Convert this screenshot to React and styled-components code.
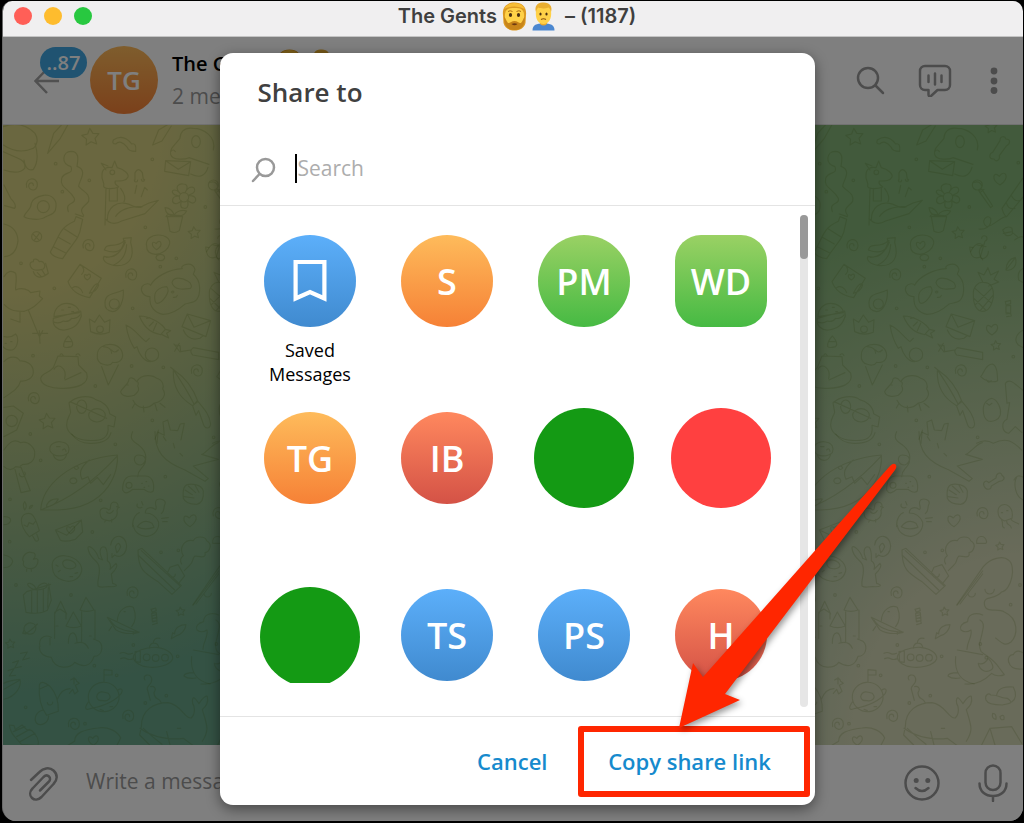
import { useState } from 'react';
import styled, { createGlobalStyle } from 'styled-components';

const GlobalStyle = createGlobalStyle`
  * {
    box-sizing: border-box;
  }

  body {
    margin: 0;
    background: #000;
    font-family: 'Open Sans', 'Noto Sans', sans-serif;
  }

  button,
  input {
    font-family: inherit;
  }

  button {
    padding: 0;
    border: 0;
    background: none;
    cursor: pointer;
  }

  svg {
    display: block;
  }
`;

const gradients = {
  blue: 'linear-gradient(#5caffa, #408acf)',
  orange: 'linear-gradient(#febb5b, #f68136)',
  green: 'linear-gradient(#9ad164, #46ba43)',
  red: 'linear-gradient(#ff885e, #d45246)',
};

const Window = styled.div`
  display: flex;
  flex-direction: column;
  height: calc(100vh - 3px);
  min-height: 560px;
  margin: 1px 1px 2px 2px;
  border-left: 1px solid #6b6b6b;
  border-radius: 10px 10px 14px 14px;
  overflow: hidden;
`;

const TitleBar = styled.div`
  display: grid;
  grid-template-columns: 1fr auto 1fr;
  align-items: center;
  flex: none;
  height: 36px;
  padding: 0 3px 5px 11px;
  background: #f0eff0;
  border-bottom: 1px solid #c4c4c4;
`;

const Lights = styled.div`
  display: flex;
  gap: 12px;
`;

const Light = styled.button`
  width: 18px;
  height: 18px;
  border-radius: 50%;
  background: ${(props) => props.$color};
`;

const WindowTitle = styled.h1`
  display: flex;
  align-items: center;
  gap: 5px;
  margin: 0;
  font-family: Inter, sans-serif;
  font-size: 20px;
  font-weight: 600;
  line-height: 28px;
  color: #3f3f3f;
`;

const Chat = styled.main`
  position: relative;
  display: flex;
  flex-direction: column;
  flex: 1;
  min-height: 0;
`;

const ChatHeader = styled.header`
  display: flex;
  align-items: center;
  flex: none;
  height: 88px;
  padding: 0 19px 2px 30px;
  background: #fff;
  border-bottom: 1px solid #e2e2e2;
`;

const BackButton = styled.button`
  position: relative;
  width: 57px;
  height: 68px;
  color: #a0a0a0;
`;

const Badge = styled.span`
  position: absolute;
  top: 1px;
  left: 7px;
  width: 47px;
  border-radius: 16px;
  background: #40a7e3;
  color: #fff;
  font-size: 20px;
  font-weight: 600;
  line-height: 31px;
`;

const ChatAvatar = styled.div`
  width: 68px;
  height: 68px;
  border-radius: 50%;
  background: ${gradients.orange};
  color: #fff;
  font-size: 26px;
  font-weight: 600;
  line-height: 68px;
  text-align: center;
`;

const ChatInfo = styled.div`
  flex: 1;
  padding-left: 14px;
`;

const ChatName = styled.div`
  display: flex;
  align-items: center;
  gap: 8px;
  font-size: 20px;
  font-weight: 600;
  line-height: 32px;
`;

const ChatMembers = styled.div`
  color: #999;
  font-size: 21px;
  line-height: 32px;
`;

const HeaderActions = styled.div`
  display: flex;
  align-items: center;
  gap: 32px;
`;

const IconButton = styled.button`
  color: #999;
`;

const Wallpaper = styled.div`
  flex: 1;
  min-height: 0;
  background:
    radial-gradient(ellipse 52% 92% at 0 0, #d4ce80 30%, rgba(212, 206, 128, 0) 100%),
    radial-gradient(ellipse 48% 88% at 100% 100%, #d2d6b4 35%, rgba(210, 214, 180, 0) 100%),
    radial-gradient(ellipse 60% 100% at 100% 0, #84b478 50%, rgba(132, 180, 120, 0) 100%),
    #68a488;

  svg {
    width: 100%;
    height: 100%;
  }
`;

const Compose = styled.footer`
  display: flex;
  align-items: center;
  flex: none;
  height: 76px;
  padding: 0 14px 0 22px;
  background: #fff;
`;

const MessageInput = styled.input`
  flex: 1;
  min-width: 0;
  margin: 0 20px 4px 25px;
  padding: 0;
  border: 0;
  outline: 0;
  font-size: 21px;

  &::placeholder {
    color: #999;
    opacity: 1;
  }
`;

const ComposeActions = styled.div`
  display: flex;
  align-items: center;
  gap: 36px;
`;

const Scrim = styled.div`
  position: absolute;
  inset: 0;
  display: flex;
  align-items: center;
  justify-content: center;
  padding: 16px 16px 16px 24px;
  background: rgba(0, 0, 0, 0.5);
`;

const Dialog = styled.section`
  display: flex;
  flex-direction: column;
  width: 100%;
  max-width: 595px;
  height: 100%;
  border-radius: 13px;
  background: #fff;
  box-shadow: 0 4px 14px rgba(0, 0, 0, 0.45);
`;

const DialogTitle = styled.h2`
  margin: 0;
  padding: 21px 38px 22px;
  color: #404040;
  font-size: 26px;
  font-weight: 600;
  line-height: 36px;
`;

const SearchRow = styled.label`
  display: flex;
  align-items: center;
  flex: none;
  height: 74px;
  padding: 0 31px;
  border-bottom: 1px solid #e4e4e4;
  color: #999;
`;

const Caret = styled.span`
  width: 2px;
  height: 29px;
  margin-left: 19px;
  background: #000;
`;

const SearchInput = styled.input`
  flex: 1;
  min-width: 0;
  height: 32px;
  padding: 0 0 2px 1px;
  border: 0;
  outline: 0;
  background: none;
  caret-color: transparent;
  font-size: 21px;

  &::placeholder {
    color: #adadad;
    opacity: 1;
  }
`;

const ListArea = styled.div`
  display: flex;
  flex: 1;
  min-height: 0;
`;

const ContactGrid = styled.div`
  display: grid;
  flex: 1;
  grid-template-columns: repeat(4, 1fr);
  grid-auto-rows: 177px;
  padding: 29px 3px 0 22px;
  overflow: hidden;
`;

const Contact = styled.button`
  display: flex;
  flex-direction: column;
  align-items: center;
`;

const AvatarSlot = styled.span`
  display: flex;
  align-items: center;
  justify-content: center;
  height: 92px;
`;

const Avatar = styled.span`
  display: flex;
  align-items: center;
  justify-content: center;
  width: 92px;
  height: 92px;
  border-radius: ${(props) => (props.$square ? '26px' : '50%')};
  background: ${(props) => gradients[props.$color]};
  color: #fff;
  font-size: 36px;
  font-weight: 600;
`;

const Disc = styled.span`
  width: 100px;
  height: ${(props) => props.$height}px;
  clip-path: circle(50px at 50% 50px);
  background: ${(props) => props.$color};
`;

const ContactName = styled.span`
  width: 100px;
  margin-top: 11px;
  color: #000;
  font-size: 18px;
  font-weight: 500;
  line-height: 24px;
`;

const ScrollTrack = styled.div`
  width: 8px;
  margin: 9px 7px;
  border-radius: 4px;
  background: #e6e6e6;
`;

const ScrollThumb = styled.div`
  height: 44px;
  border-radius: 4px;
  background: #999;
`;

const DialogFooter = styled.div`
  display: flex;
  align-items: center;
  justify-content: flex-end;
  flex: none;
  gap: 30px;
  height: 89px;
  padding: 0 5px;
  border-top: 1px solid #e4e4e4;
`;

const TextButton = styled.button`
  color: #168acd;
  font-size: 22px;
  font-weight: 600;
  line-height: 32px;
`;

const Callout = styled.div`
  position: relative;
  display: flex;
  align-items: center;
  justify-content: center;
  width: 232px;
  height: 71px;
  padding-right: 8px;
  border: 6px solid #ff2600;
  border-radius: 3px;
`;

const Arrow = styled.svg`
  position: absolute;
  right: -94px;
  bottom: 62px;
  overflow: visible;
  filter: drop-shadow(2px 3px 3px rgba(0, 0, 0, 0.4));
  pointer-events: none;
`;

// emoji with a beard, used in both titles
const BeardEmoji = () => (
  <svg width="25" height="29" viewBox="0 0 25 29" aria-hidden="true">
    <path d="M1 13C0 5 5 .5 12.500 .5S25 5 24 13l-.5 8c-1 5-6 7.500-11 7.500S2.500 26 1.500 21z" fill="#dc9a22" />
    <path d="M3 12c1-5 3-6 9.500-6S21 7 22 12c.5 9-2 15-9.500 15S2.500 21 3 12z" fill="#ffd148" />
    <path d="M2 7Q5 1 12.500 1T23 7q-5-2.500-10.500-2.500T2 7z" fill="#f7bd35" />
    <path d="M2 15c2 1 2 4 4 6 2 .5 3.500-2 6.500-2s4.500 2.500 6.500 2c2-2 2-5 4-6 0 9-4 13-10.500 13S2 24 2 15z" fill="#c8851a" />
    <path d="M9.500 22q3-1.500 6 0-3 2.500-6 0z" fill="#6f3b12" />
    <ellipse cx="8.500" cy="13" rx="1.600" ry="2" fill="#4a2e12" />
    <ellipse cx="16.500" cy="13" rx="1.600" ry="2" fill="#4a2e12" />
    <path d="M6 9.500q2-1.500 4.500 0M14.500 9.500q2.500-1.500 4.500 0" stroke="#a86d18" fill="none" />
  </svg>
);

const ManEmoji = () => (
  <svg width="23" height="29" viewBox="0 0 23 29" aria-hidden="true">
    <path d="M.5 28.500c0-6 4-7 11-7s11 1 11 7z" fill="#4b87d0" />
    <path d="M8 18h7v4q-3.500 3-7 0z" fill="#e9a92c" />
    <path d="M4 9c-1 7 2 13 7.500 13S20 16 19 9c-.5-5-4-8-7.500-8S4.500 4 4 9z" fill="#ffd148" />
    <path d="M4 10C2 4 6 0 11 .5 17 0 21 4 19 10c-1-3-1.500-4-2.500-4.500C13 7 8 6.500 6.500 5.500 5 6.500 4.500 8 4 10z" fill="#e9ae30" />
    <ellipse cx="8.500" cy="12" rx="1.100" ry="1.500" fill="#4a2e12" />
    <ellipse cx="14.500" cy="12" rx="1.100" ry="1.500" fill="#4a2e12" />
    <path d="M9 17.500q2.500-1.500 5 0" stroke="#8a5312" strokeWidth="1.200" fill="none" />
  </svg>
);

// wallpaper doodles, four sheets that together make one tile
const doodleSheets = [
  {
    transform: 'translate(-3 -5) scale(.3333)',
    stars: [[272, 52, 27], [583, 339, 19], [142, 905, 25]],
    swirls: [[265, 376], [393, 464], [590, 752], [101, 835], [95, 194]],
    hearts: [[470, 375, 14], [262, 470, 10]],
    dots: [[167, 131], [187, 215], [457, 118], [268, 181], [616, 261], [436, 322], [529, 415], [481, 440], [163, 505], [398, 565], [63, 430], [99, 707], [395, 738], [490, 742], [286, 798], [457, 901], [91, 942]],
    paths: [
      'M10 20q55-20 95 20 15 25-5 45-45 20-90-10M105 70q15 50-5 78-22 8-28-28M12 150q45 15 62-5 5-20-20-30l-44-20',
      'M143 100l18-60 26-28M143 100l38-45 25-45',
      'M340 60q30-20 55 12 15-5 12 22-22 0-25-12-20-25-35-10-12 0-7-12z',
      'M458 75l18-45 30-18M458 75l28-12 28-45',
      'M640 90c10-40-30-65-60-65-30-5-40 15-40 30-15 20-32 30-28 48 5 20 45 15 55 10l60 20M575 65a13 18 0 1 0 26 0 13 18 0 1 0-26 0M512 95q8-10 14 0M497 122l75 3-6 42-72-13zM497 122l38 26 37-23M572 162q40 20 52-20',
      'M205 275c-12-30 25-20 18-40-15-30-45-30-38-60 8-22 38-10 28-35-32-10-25-45 0-46 28 0 20 30 18 45 35 12 5 45 5 60 15 18 35 20 30 45-10 15-32 20-15 42',
      'M72 290c5-18 22-20 22-40 5-20 30-22 42-25 20 0 35 15 32 35 0 22-20 25-30 30-20 15-60 5-66 0zM112 260a18 18 0 1 0 36 0 18 18 0 1 0-36 0',
      'M228 290l20 8-5 22c-5 40-28 50-55 96-15 0-35-10-37-20 30-52 25-70 72-92zM190 325l40 25M175 352l36 20M160 380l36 18M226 282l24 8',
      'M306 165c0-20 15-25 30-22l8-20 8 20c20 5 35 18 32 28-5 12-20 12-38 12-5 10 5 12 10 18-20 8-45 5-45-2 5-10-8-18-5-34zM318 150l-14-20 20 8M330 157a7 7 0 1 0 14 0 7 7 0 1 0-14 0M318 205l-3 110M328 205v38h24v-38M362 205q18 25 10 40M315 295q20 25 50 8l70-22 40-40-28 8-20 10q-60 0-80 30M322 300c0-40 30-55 55-50 20 2 30 20 50 10',
      'M405 180v-22q10-18 22 0l3 20M403 180a5 6 0 1 0 10 0M424 178a5 6 0 1 0 10 0M405 220l5-24M424 230l10-28 8 8',
      'M538 232a14 14 0 1 0 28 0 14 14 0 1 0-28 0M540 220c-20-22 0-30 10-28 18 0 10 20 6 24 10-20 30-18 28-4-2 10-15 12-20 14 20 0 26 8 22 18-6 12-20 0-24-4 6 20-2 28-12 24-10 0-8-12-6-22-12 16-28 8-26-2 0-10 12-12 20-12-26-4-24-18-14-18 8 0 12 6 16 10zM498 290h50M502 290l8 44q15 8 28-2l10-42M522 288c0-15-15-25-27-25 2 15 12 25 27 25zM522 288c5-15 25-20 38-15-8 15-22 18-38 15zM498 290q2-10 24-5 22 0 26 6',
      'M95 350a15 15 0 1 0 30 0 15 15 0 1 0-30 0M100 343l18 18M118 340l-16 22',
      'M370 355l24-2-2 14c15 50-8 72-45 70-35-5-40-20-35-28 30 8 50-10 60-42zM375 362c-5 30-25 42-62 28 5-12 5-12 20-14 22 0 32-5 40-14M340 436c30-15 38-35 40-62M318 412q40 0 58-45',
      'M440 378c-5-20 15-33 35-33 22 0 36 12 34 26-5 22-25 30-42 32-18 0-28-10-27-25zM468 412c4-14 26-10 26 2-4 12-24 10-26-2z',
      'M92 440c-5-10 0-15 8-15 0-15 15-5 18 0 12-5 22 12 12 22-15 5-30 8-38-7zM100 455c5 15 20 25 45 5l-8-30M112 458l12 12M126 450l10 16',
      'M204 485l36-52 64 42-35 58c-30-5-55-20-65-48zM218 503c10-8 25 0 30 15M240 433q20 15 5 30M268 520q20-38 28-25-5 20-28 25z',
      'M315 550c0-30 22-25 55-40 2 30-10 65-32 65-15-2-24-10-23-25zM328 552a15 15 0 1 0 30 0 15 15 0 1 0-30 0',
      'M450 530c-20 0-30-18-24-30 8-12 24-10 26-4 12-25 55-48 95-50-10-10 30-25 38 2 0 8-5 10-5 15 25 20 22 60 10 76-10 12-25 8-36 14-20 18-40 30-65 30-22-3-42-20-39-53zM464 530c0-20 20-30 36-30 15 15-15 50-28 50-8 0-8-12-8-20zM516 488c5-20 30-15 48-4 10 5 15 20 4 22-20 2-45 5-52-18zM514 516q5-5 8 0-4 6-8 0M520 532q10 2 12-6',
      'M12 470q15-25 35-10c5 20-2 40 0 50 20-10 40 0 45 8l28-5-2 15 10 8c-20 20-30 30-55 38-25 0-42 0-60-20M60 575v32l-28-10M85 570l32 78M98 640l45 0M118 632l2 38M128 632l-10 20',
      'M162 590c0-20 15-40 38-40 22 0 38 15 38 28zM160 595l82-22 2 15c-10 30-25 38-50 42-20 2-38-12-34-35zM160 605q15 8 30-2 15 5 25-8 15 3 25-10M185 570h6M205 562h6M215 575h6',
      'M272 635l-4-38 16 10 14-22 16 22 16-8-2 38q-28 12-56-2zM290 628a10 10 0 1 0 20 0 10 10 0 1 0-20 0',
      'M418 588c35 0 70 25 78 40l-14 16c-20-5-45-10-64-56zM440 595l10-2M448 618l12-12M470 610l-10 22M496 628l16 4-12 8 6 14-20-10',
      'M378 615c25 10 40 35 60 50l10-10M378 615c5 32 12 50 25 70l8-5c5 20 20 45 40 45M436 704a20 20 0 1 0 40 0 20 20 0 1 0-40 0',
      'M546 620l16-38 70 20-14 48zM562 582l20 40 50-20M550 630q15 35 50 25l10-8',
      'M580 683l76 14v22l-78-14q-12-12 2-22zM572 690l-30 5-2-18-15-2M522 672l18 24M524 694l14-24',
      'M12 650q20 5 35-8c10 10 8 40-10 48-15 2-22-3-28-10M15 670h4M32 665h4',
      'M205 648q20 22 10 32-18 5-24 0-2-15 14-32zM194 665h20',
      'M292 705c0-22 20-32 38-32 22 0 38 14 38 34-2 20-20 22-30 20-5 10-20 10-30 5-10-2-18-12-16-27zM305 740l20 55 30-60M335 700q0-18-25-20M335 690q8 12 20 0',
      'M12 725c15-18 40-18 48-2 20-2 40 12 40 32 0 20-20 30-38 28-5 20-20 30-50 50',
      'M122 775c5-18 22-12 38-32l14-35 60 2 2 25 24 24c10 35-30 45-68 46-40 2-70-10-70-30zM162 748c10-22 40-5 32 28M195 780l48-22M180 705q5-8 10 2M228 705q8-8 12 2',
      'M362 815c5-12 20-20 24-32 0-15 16-10 22 0 5 0 10 8 5 15 10 15-5 22-10 28-15 5-38 5-41-11zM410 785c15-25 50-20 60-10 20 5 22 25 18 32 15 20-5 40-25 42-20 20-50 20-64-8M405 850l-8 14M430 858l2 18M465 852l6 20M480 850l15 12M380 795h5',
      'M512 742l10 8c30 20 58 55 72 95l-16 12c-35-20-60-50-58-105M522 752q40 60 60 100M578 858l10 28 8-14 14 40c4 16 20 16 22 0-4-30-20-45-40-70z',
      'M200 915c0-20 8-25 12-38l-5-28c20-20 60-25 80-10 20 5 40 20 42 42l18 10-5 30-18-5c5 40-20 48-60 45-30 0-64-20-64-46zM230 860a15 20 0 1 0 30 0 15 20 0 1 0-30 0M266 886a25 20 0 1 0 50 0 25 20 0 1 0-50 0M210 845l110 50',
      'M12 862l28-4 30 22-20 50-38 20M18 903a17 17 0 1 0 34 0 17 17 0 1 0-34 0',
      'M465 958l8-22 20 10-4-40 14-6 8 30 22 2 8-20 12-2-10 50M12 195l20 40q20 20 12 30l-30-8M12 312q40 10 42 50-5 45-40 48M620 395q18-35 36-20-20 20 0 45',
    ],
  },
  {
    transform: 'translate(-3 305) scale(.3333)',
    stars: [[31, 642, 15], [542, 545, 14]],
    swirls: [[397, 488], [384, 858], [221, 882]],
    hearts: [[570, 270, 20], [212, 298, 13], [280, 930, 16]],
    dots: [[346, 43], [122, 91], [496, 140], [30, 208], [302, 211], [277, 306], [29, 335], [483, 367], [535, 361], [48, 465], [213, 495], [400, 645], [533, 679], [283, 707], [350, 736], [436, 819], [499, 797], [255, 881], [77, 832]],
    paths: [
      'M12 60q25-40 50-22c25-8 45 20 42 35 0 22-18 32-35 30l-8 5M12 110q20 18 35 0l16 2 28 70-28 6-18-70M58 130a9 9 0 1 0 16-4',
      'M150 62c-5-20 20-30 35-26 20 2 26 20 20 32-12 12-44 16-55-6zM160 75q5 15 20 16 15 0 20-18M170 50h10M188 60q8-8 10 4',
      'M122 240c5-70 80-150 230-165 5 40-20 160-180 165zM122 240c80-30 160-85 228-160M268 90c-30 25-30 40-22 58l18-8 8 20 20-18 18 22 22-30M210 155a10 8 0 1 0 20-5 10 8 0 1 0-20 5M140 225q10-20 35-18-10 20-35 24zM222 112q10-8 14 2-8 10-14-2',
      'M398 5c-12 25 5 30 20 42 25 20 25 50 5 58-25 0-25-30-8-30 20 0 25 10 20 25-10 20-22 20-22 40M368 180c0-30 10-42 28-42h40c20 0 28 20 24 45-10 10-20 0-28-5h-34c-10 8-22 18-30 2zM378 166a9 9 0 1 0 18 0 9 9 0 1 0-18 0M425 160h2M438 155h2M445 168h2M432 172h2',
      'M465 5c0 60 25 90 90 115l60 34 10-8-45-38 75-20-50-15c10 0 30-30 50-35M490 20l8 12M520 40l4 14M540 70l8 8M475 0l-4 40',
      'M550 205c-2-20 0-40 15-42 10-2 40 0 45 20 2 30-8 38-20 40-20 0-35-5-40-18zM555 180l22 14M565 168l22 20M552 200l30 4M585 165l12 22',
      'M300 250c-2-20 20-18 26-10 12-2-2-20 15-24 18 0 14 20 10 25 5 25-20 35-30 30-12 0-20-8-21-21zM350 230l8 2M318 270l-4 6M335 268v8M320 246q10 10 20-4',
      'M398 290c-2-25 12-40 20-42M412 222c-5 10 8 14 14 10M425 215l4 10M400 285a38 38 0 1 0 76-8c-10-25-30-28-40-28 0-18 20-20 30-10 10-5-8-20 5-30 10-5 25 0 25 10-8 18 0 22-12 32M412 290q20-25 44-10l6 12q-30 10-50-2M485 265l20-2M488 275l14 0',
      'M64 270c2-20 20-22 30-18 12 8 18 30 24 50l-30 18c-14-15-24-30-24-50zM72 285l10 5 5-12 12 5 8-10M98 318l8 14q8 4 10-4l-6-16M74 240q-8-15 0-25 10 15 0 25M88 236q0-10 10-10-2 8-10 10',
      'M166 300l78-30 4 36-22 22q-35 10-45 2zM166 300l34 16 44-46',
      'M68 390c0-14 15-28 28-22 10 0 14 8 4 20 20-8 14 10 10 18-8 15-35 12-40-2-2-5 5-8-2-14zM80 418v6M94 418v6',
      'M157 412c-5-30 25-38 42-34 35 5 48 30 46 45-8 30-35 35-55 28-20-5-32-18-33-39zM188 398c5-15 35-8 40 8 0 15-40 15-40-8M168 405l6 4M175 425l6-4M210 440h8M225 430l8-2',
      'M296 405c-5-15-28-20-32-50 0-15 25 5 32 30l12 5c-15-28-5-45 8-38 8 10 6 25 6 40 12 8 10 20 8 26l18-18c5 5 4 15-14 32l4 28c18 5 14 12-12 10-20 0-22 5-32-2-4-22 10-35 2-63zM332 345a24 30 0 1 1 12 30l-8 8 0-12M346 350q10-20 16 0-5 14-12 18z',
      'M414 360c0 60 20 70 60 95l42 38 28-26-118-112zM414 375l110 105M424 362l115 105M502 430l8-18 24-8 20 34-18 22M506 432a10 10 0 1 0 20 0M545 402c-8-14-2-20 5-25-15-25 5-50 30-45 8-15 35-14 40 0 20 10 8 35-5 36 5 20-20 10-30 10-12 10 0 15-18 30l-14 14',
      'M80 485l-10 10 8 52q40 8 64-6l12-30-8-50M80 485l72-22M110 480c-25-5-35-22-20-20 8 2 16 8 20 20 5-20 25-25 32-16 0 12-20 16-32 16zM95 484v64M112 482v66M130 478l0 66M145 472l-2 60',
      'M580 525l76-102M588 522l68-90M612 490a10 10 0 1 0 22 0',
      'M164 625v-78l16-10 18 12v18M164 552l18-38 18 38M198 588l22-42 24 42q-24 10-46 0zM240 540l18-38 24 38q-22 8-42 0zM245 545v90M285 540v88M205 640c0-40 25-42 26-4M120 650c-5-22 10-40 34-28M118 650c0 25 20 30 36 32 10 38 60 35 70 15 30 20 50 8 58-18 30 0 30-45 8-48l-10-4M150 625v20M225 640q30-10 40 15M168 588h6M268 618h6',
      'M322 562l95 45q-40 10-70-8zM330 570q20 35 88 36M352 572c2-35 30-48 48-40 8 20 10 40-5 58M335 590l-8 12M400 605v8M372 545h4',
      'M453 538l14-4 2 8-12 5zM455 550l14-2 2 24-14 2zM458 576l12-4 2 8-14 4M456 558l14-4M457 566l14-4',
      'M524 612c0-20 18-28 34-28-2 18-15 30-26 32l-18 10 4-18z',
      'M72 598c0-15 15-22 25-18 15 5 12 20 5 28-12 8-25 5-30-10zM70 608q10 8 42-26M72 600l-4 10 10 2',
      'M656 555c-25-10-45 0-45 20-18 5-25 15-20 25 10 8 22 5 30 0 5 20-12 35-12 58M580 660l76 14M575 680c-5 50 20 75 56 82M582 728c-20 0-30 5-30 10 10 8 25 8 36 6M600 578h5',
      'M400 682c0-18 40-32 70-30 40 5 50 25 48 35-8 20-50 28-75 24-20-2-40-12-43-29zM405 665l16-2v34l-14-2zM448 655c2-22 25-18 28-4M460 640c0-12 8-18 20-15M430 682a10 10 0 1 0 20 0 10 10 0 1 0-20 0M457 684a10 10 0 1 0 20 0 10 10 0 1 0-20 0M485 683a10 10 0 1 0 20 0 10 10 0 1 0-20 0M360 670q10-5 18 0t20 0M362 686q10-5 18 0t20 0',
      'M24 722l18-6-14 22 18-2M38 698l18-6-12 22 20-4M62 670l20-4-14 24 20-6',
      'M12 760q10-8 48-12c5 20-10 50-48 60M12 778l48-28',
      'M118 765c5-15 20-5 32 4 20 22 26 50 25 75l-35 12c-15-20-25-50-22-91zM118 778l26-12M130 840c-22 5-30 25-20 40 12 10 35 0 36-22M172 808c10-25 25-32 38-32M142 818a8 8 0 1 0 16-2M212 750q15-10 18 4l8 6-12 6 8 18-10 8-6-14-10 12M222 742v20',
      'M265 805a46 44 0 1 0 92-8 46 44 0 1 0-92 8M312 755v-36l24 2v14h-22M266 815c-15 20-10 28 8 20 40-8 70-20 90-45 8-16-5-16-12-8M290 800c5-20 20-15 35-10 15 15-5 25-15 22-12 0-18 0-20-12M330 830h8M300 838l10 4',
      'M424 890c0-50 38-72 80-72 40 5 50 50 70 46 10-10 10-25 8-35-8-12-5-25 0-26 10 8 12 15 15 18 10-15 18-25 25-22 5 20-5 30-15 40 15 50 22 60 0 95M424 890l-5 25 30 30M420 895c40 30 95 35 130 30l30 22M430 895q30 28 56 48M500 905l10 40M532 895h10M484 818c-10-20-20-5-22-30 10-15-2-20-10-18M435 750c-10-15 15-22 20-4 4 20-20 20-12 35l8 30',
      'M28 885l14 2 4 12 20-14 14 14 14 2c15 12 24 30 20 46l-50-4c-15-20-32-28-36-58zM40 905l35-15M50 920l40-22M60 935l45-25',
      'M200 948l24-14c0-25 25-35 70-40 30-5 60 10 68 30l-12 24M215 12q20 30 60 28 50 0 58-32M12 260q20 0 20 12-5 12-20 12M12 375q25 5 26 20-5 18-26 18',
    ],
  },
  {
    transform: 'translate(43 -5) scale(.3333)',
    stars: [[558, 677, 15], [544, 22, 19]],
    swirls: [],
    hearts: [[570, 175, 20], [546, 627, 18]],
    dots: [[584, 382], [610, 710], [503, 952], [625, 128]],
    paths: [
      'M570 62c0-15 15-15 18-5 14 0 14 14 2 20l-22 30c4 12-10 22-16 10-18 0-14-16-4-20z',
      'M487 195a15 15 0 1 0 30 0 15 15 0 1 0-30 0M490 188q20-8 26 12M506 212l10-4 32 50-6 5zM522 208l-12 10',
      'M576 265l62-90M590 290l50-60M576 265q5 20 14 25M590 250q5 20 25 15M605 228q10 20 28 12M590 290c-20 0-40 30-60 30-20-15 0-40 12-25 5 25-20 35-35 32',
      'M578 330q15-15 28-5l2 15q-10 12-22 4zM608 338l14 12M614 360q20-15 26-8M580 340l26-5',
      'M515 355a8 8 0 1 1 10 8l-14 48c-25 10-30-10-32-30l10 2M511 412c8 10 25-2 24-18M502 375l26 5',
      'M588 450q0-30 28-38c8 25-10 42-28 38zM588 450l26-34',
      'M490 525c-2-25 15-40 30-38 22 0 32 15 30 45-5 25-15 42-32 42-18 0-28-20-28-49zM495 505l50 45M492 535l35 35M545 505l-48 48M550 525l-40 48M518 485l-14-28 18 8 12-22 8 22 24-12-14 25 14 8-30 12',
      'M586 545l16-4v10l-14 4zM588 558l14-2v24l-14-2zM588 582l14-2 2 8-14 2',
      'M512 770c10-10 15-38 35-38 15 5 15 30 16 50-15 8-40 0-51-12zM530 780q5 12 14 2',
      'M520 870c-2-20 15-35 25-35 18 5 30 30 26 50-5 15-22 22-36 18-10-5-15-20-15-33zM530 850l8 6 8-6',
      'M586 790c15-20 35 10 52 20M586 790l5 60 8-2-8 50c-20 10-15 38 5 42l20-20 20 18',
      'M500 970q25-15 50 0c40-20 60-5 85 20M640 630c-20 10-30 30-15 45l15 8M640 445q-20 10-14 35l14 8',
    ],
  },
  {
    transform: 'translate(43 315) scale(.3333)',
    stars: [[570, 319, 13]],
    swirls: [[517, 220]],
    hearts: [],
    dots: [[602, 494], [630, 435], [511, 612], [529, 653]],
    paths: [
      'M522 138c-5-12 8-20 14-10l22-14c0-15 15-20 18-8 12 8 5 18-8 18l-24 14c0 12-16 14-22 0z',
      'M564 215c0-20 20-28 34-15 12 12 10 25 8 35l-22 8c-12-5-20-15-20-28zM575 240c8 15-5 15 8 24M590 244c0 15 12 5 14 20M602 236c5 12 18 10 24 16M574 218h4M590 212h4',
      'M500 310c-2-25 25-28 30-4l-2 4zM440 495l80-115c20-25 60-35 75-20 25 15 10 90-20 96-20 25-50 10-52 32 0 35 40 15 60 28 45 20 40 70 20 90-20 15-30 0-46-12M525 448a14 14 0 1 0 28 0',
      'M510 540c15 8 10 25 8 32-5 30-15 40-5 62 15 15 35 20 55 50l15 20c-10 5-28 5-38-4-20 20-50 35-80 32M505 670c10 5 20 0 30-15 10 10 20 30 8 35-15 10-35 0-38-20',
      'M596 668c-5-15 5-25 14-24 10-20 30-5 30-5M596 665q5 25 42 22M528 780c-5-15 8-22 14-15 30 0 20 8 50 10 20 15 10 15-15 20-30 0-45-5-49-15zM560 765c5-25 30-25 50-24 10 20 10 35-5 45',
      'M515 915l25-50 65-5 30 50M540 865l15 50M548 820q12 0 10 18-14-2-10-18M570 830q15-10 12 8-10 5-12-8M612 120q10-20 28-8M640 180c-25-10-30-50-20-68',
    ],
  },
];

const starPath = (x, y, r) => {
  const points = [];
  for (let i = 0; i < 10; i++) {
    const radius = i % 2 ? r * 0.5 : r;
    const angle = (Math.PI / 5) * i - Math.PI / 2 - 0.1;
    points.push(`${(x + radius * Math.cos(angle)).toFixed(1)} ${(y + radius * Math.sin(angle)).toFixed(1)}`);
  }
  return `M${points.join('L')}z`;
};

const swirlPath = (x, y) =>
  `M${x - 15} ${y + 8}c-8-30 32-34 32-8 0 24-28 18-26 2 2-10 14-10 14 0`;

const heartPath = (x, y, r) =>
  `M${x} ${y + r}c${-r * 1.4} ${-r * 0.8} ${-r} ${-r * 2.2} ${-r * 0.1} ${-r * 1.3}c${r * 0.8} ${-r * 1.2} ${r * 1.8} ${r * 0.2} ${r * 0.1} ${r * 1.3}z`;

const dotPath = (x, y) => `M${x - 4} ${y}a4 4 0 1 0 8 0 4 4 0 1 0-8 0`;

const Doodles = () => (
  <svg aria-hidden="true">
    <defs>
      <pattern id="doodles" width="764" height="640" patternUnits="userSpaceOnUse">
        {doodleSheets.map((sheet) => (
          <g
            key={sheet.transform}
            transform={sheet.transform}
            fill="none"
            stroke="rgba(60, 90, 0, 0.15)"
            strokeWidth="3.500"
            strokeLinecap="round"
            strokeLinejoin="round"
          >
            {sheet.paths.map((d) => (
              <path key={d} d={d} />
            ))}
            <path d={sheet.stars.map((star) => starPath(...star)).join('')} />
            <path d={sheet.swirls.map((swirl) => swirlPath(...swirl)).join('')} />
            <path d={sheet.hearts.map((heart) => heartPath(...heart)).join('')} />
            <path d={sheet.dots.map((dot) => dotPath(...dot)).join('')} />
          </g>
        ))}
      </pattern>
    </defs>
    <rect width="100%" height="100%" fill="url(#doodles)" />
  </svg>
);

const contacts = [
  { name: 'Saved Messages', color: 'blue', saved: true },
  { initials: 'S', color: 'orange' },
  { initials: 'PM', color: 'green' },
  { initials: 'WD', color: 'green', square: true },
  { initials: 'TG', color: 'orange' },
  { initials: 'IB', color: 'red' },
  { disc: '#149a14', height: 100 },
  { disc: '#ff4040', height: 100 },
  { disc: '#149a14', height: 96 },
  { initials: 'TS', color: 'blue' },
  { initials: 'PS', color: 'blue' },
  { initials: 'H', color: 'red' },
];

const App = () => {
  const [search, setSearch] = useState('');
  const [message, setMessage] = useState('');

  return (
    <>
      <GlobalStyle />
      <Window>
        <TitleBar>
          <Lights>
            <Light $color="#ff5f57" aria-label="Close" />
            <Light $color="#febc2e" aria-label="Minimize" />
            <Light $color="#28c840" aria-label="Zoom" />
          </Lights>
          <WindowTitle>
            The Gents <BeardEmoji /> <ManEmoji /> <span>&nbsp;– (1187)</span>
          </WindowTitle>
        </TitleBar>

        <Chat>
          <ChatHeader>
            <BackButton aria-label="Back">
              <svg width="28" height="68" viewBox="0 0 28 68" fill="none" stroke="currentColor" strokeWidth="2.500">
                <path d="M26 35H3M14 23L2.500 35 14 47" />
              </svg>
              <Badge>..87</Badge>
            </BackButton>
            <ChatAvatar>TG</ChatAvatar>
            <ChatInfo>
              <ChatName>
                The Gents <BeardEmoji /> <ManEmoji />
              </ChatName>
              <ChatMembers>2 members</ChatMembers>
            </ChatInfo>
            <HeaderActions>
              <IconButton aria-label="Search messages">
                <svg width="30" height="32" viewBox="0 0 30 32" fill="none" stroke="currentColor" strokeWidth="2.500" strokeLinecap="round">
                  <circle cx="12" cy="14" r="10" />
                  <path d="M19.500 21.500L27 29" />
                </svg>
              </IconButton>
              <IconButton aria-label="Voice chat">
                <svg width="34" height="34" viewBox="0 -1 34 34" fill="none" stroke="currentColor" strokeWidth="2.500" strokeLinecap="round" strokeLinejoin="round">
                  <path d="M7 2h20a5 5 0 0 1 5 5v14a5 5 0 0 1-5 5H19.500l-6.500 6c-1.500 1-2.500 0-2.500-1.500v-4.500H7a5 5 0 0 1-5-5v-14a5 5 0 0 1 5-5z" />
                  <path d="M10.500 11.500v6.500M17 9.500v11M23.500 11.500v6.500" />
                </svg>
              </IconButton>
              <IconButton aria-label="More">
                <svg width="20" height="32" viewBox="0 0 20 32" fill="currentColor">
                  <circle cx="10" cy="7" r="3.400" />
                  <circle cx="10" cy="17" r="3.400" />
                  <circle cx="10" cy="26.500" r="3.400" />
                </svg>
              </IconButton>
            </HeaderActions>
          </ChatHeader>

          <Wallpaper>
            <Doodles />
          </Wallpaper>

          <Compose>
            <IconButton aria-label="Attach a file">
              <svg width="36" height="38" viewBox="0 0 36 38" fill="none" stroke="currentColor" strokeWidth="2.500" strokeLinecap="round" strokeLinejoin="round">
                <path d="M6 16L14.500 8C18 4.500 24 2.500 28.500 6.500s4 9.500 0 13.500L16.500 33c-3 3-7 3.500-9.500 1s-2.500-6.500 .5-9.500L18.500 13c2-2 4-2 5.500-.5s1.500 3.500-.5 5.500L15 26.500" />
              </svg>
            </IconButton>
            <MessageInput
              aria-label="Message"
              placeholder="Write a message..."
              value={message}
              onChange={(e) => setMessage(e.target.value)}
            />
            <ComposeActions>
              <IconButton aria-label="Emoji">
                <svg width="38" height="38" viewBox="0 0 38 38" fill="none" stroke="currentColor" strokeWidth="2.500" strokeLinecap="round">
                  <circle cx="19" cy="19" r="16.500" />
                  <circle cx="13.200" cy="16.500" r="2.500" fill="currentColor" stroke="none" />
                  <circle cx="24.800" cy="16.500" r="2.500" fill="currentColor" stroke="none" />
                  <path d="M12.500 24q6.500 6 13 0" />
                </svg>
              </IconButton>
              <IconButton aria-label="Record a voice message">
                <svg width="32" height="38" viewBox="0 0 32 38" fill="none" stroke="currentColor" strokeWidth="2.500" strokeLinecap="round">
                  <rect x="8.500" y="1.500" width="15" height="24.500" rx="7.500" />
                  <path d="M2.500 19.500c0 8 6 12.500 13.500 12.500s13.500-4.500 13.500-12.500M16 32v5" />
                </svg>
              </IconButton>
            </ComposeActions>
          </Compose>

          <Scrim>
            <Dialog role="dialog" aria-labelledby="share-title">
              <DialogTitle id="share-title">Share to</DialogTitle>
              <SearchRow>
                <svg width="25" height="28" viewBox="0 0 25 28" fill="none" stroke="currentColor" strokeWidth="2.500" strokeLinecap="round">
                  <circle cx="14.500" cy="12.500" r="8.500" />
                  <path d="M8.500 19L2 26" />
                </svg>
                <Caret />
                <SearchInput
                  aria-label="Search"
                  placeholder="Search"
                  value={search}
                  onChange={(e) => setSearch(e.target.value)}
                />
              </SearchRow>

              <ListArea>
                <ContactGrid>
                  {contacts.map((contact, index) => (
                    <Contact key={index} aria-label={contact.name || contact.initials || 'Contact'}>
                      <AvatarSlot>
                        {contact.disc ? (
                          <Disc $color={contact.disc} $height={contact.height} />
                        ) : (
                          <Avatar $color={contact.color} $square={contact.square}>
                            {contact.saved ? (
                              <svg width="34" height="44" viewBox="0 0 34 44" fill="none" stroke="#fff" strokeWidth="4.200">
                                <path d="M2.600 3h28.800v36.500L17 33 2.600 39.500z" />
                              </svg>
                            ) : (
                              contact.initials
                            )}
                          </Avatar>
                        )}
                      </AvatarSlot>
                      {contact.name && <ContactName>{contact.name}</ContactName>}
                    </Contact>
                  ))}
                </ContactGrid>
                <ScrollTrack>
                  <ScrollThumb />
                </ScrollTrack>
              </ListArea>

              <DialogFooter>
                <TextButton>Cancel</TextButton>
                <Callout>
                  <TextButton>Copy share link</TextButton>
                  <Arrow width="220" height="266" viewBox="0 0 220 266" aria-hidden="true">
                    <path
                      d="M1 265L15 200 25 214 212 3Q216 -1 218 2 219 4 217 7L47 231 62 237z"
                      fill="#ff2600"
                    />
                  </Arrow>
                </Callout>
              </DialogFooter>
            </Dialog>
          </Scrim>
        </Chat>
      </Window>
    </>
  );
};

export default App;
